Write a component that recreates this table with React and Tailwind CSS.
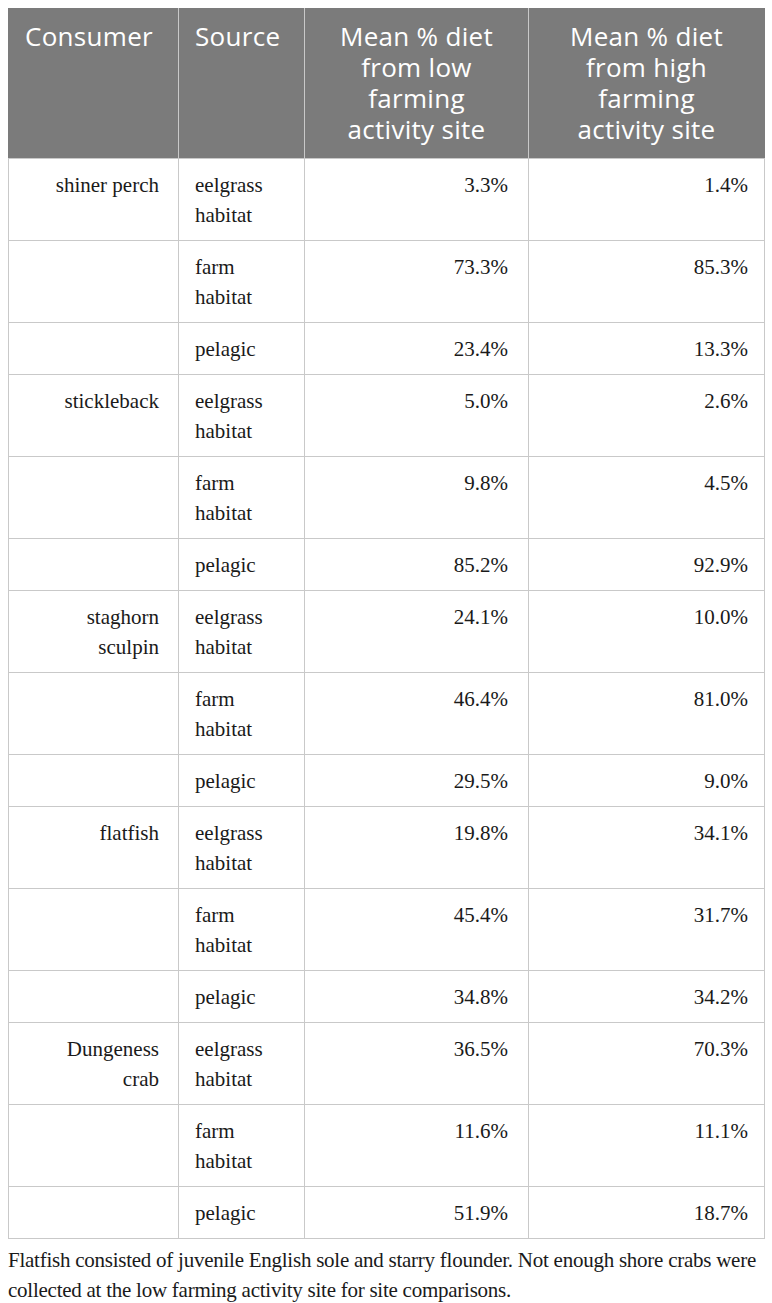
const rows = [
  [["shiner perch"], ["eelgrass", "habitat"], "3.3%", "1.4%"],
  [[], ["farm", "habitat"], "73.3%", "85.3%"],
  [[], ["pelagic"], "23.4%", "13.3%"],
  [["stickleback"], ["eelgrass", "habitat"], "5.0%", "2.6%"],
  [[], ["farm", "habitat"], "9.8%", "4.5%"],
  [[], ["pelagic"], "85.2%", "92.9%"],
  [["staghorn", "sculpin"], ["eelgrass", "habitat"], "24.1%", "10.0%"],
  [[], ["farm", "habitat"], "46.4%", "81.0%"],
  [[], ["pelagic"], "29.5%", "9.0%"],
  [["flatfish"], ["eelgrass", "habitat"], "19.8%", "34.1%"],
  [[], ["farm", "habitat"], "45.4%", "31.7%"],
  [[], ["pelagic"], "34.8%", "34.2%"],
  [["Dungeness", "crab"], ["eelgrass", "habitat"], "36.5%", "70.3%"],
  [[], ["farm", "habitat"], "11.6%", "11.1%"],
  [[], ["pelagic"], "51.9%", "18.7%"],
];

const Lines = ({ items }) =>
  items.map((t, i) => (
    <div key={i} className="whitespace-nowrap">
      {t}
    </div>
  ));

export default function App() {
  return (
    <div className="bg-white p-2 w-[772px] min-h-[1303px]">
      <table className="w-[756px] border-collapse table-fixed">
        <colgroup>
          <col className="w-[170px]" />
          <col className="w-[126px]" />
          <col className="w-[224px]" />
          <col className="w-[236px]" />
        </colgroup>
        <thead>
          <tr className="bg-[#7b7b7b] text-white font-['Open_Sans',sans-serif] text-[26px] leading-[31px] tracking-[0.3px] align-top">
            <th className="font-normal text-left pl-4 pr-2 pt-3 pb-[13px] border border-[#c9c9c9] border-t-[#7b7b7b] border-l-[#7b7b7b]">Consumer</th>
            <th className="font-normal text-left pl-4 pr-2 pt-3 pb-[13px] border border-[#c9c9c9] border-t-[#7b7b7b]">Source</th>
            <th className="font-normal text-center px-2 pt-3 pb-[13px] border border-[#c9c9c9] border-t-[#7b7b7b]">
              Mean % diet
              <br />
              from low
              <br />
              farming
              <br />
              activity site
            </th>
            <th className="font-normal text-center px-2 pt-3 pb-[13px] border border-[#c9c9c9] border-t-[#7b7b7b] border-r-[#7b7b7b]">
              Mean % diet
              <br />
              from high
              <br />
              farming
              <br />
              activity site
            </th>
          </tr>
        </thead>
        <tbody className="font-['Liberation_Serif',serif] text-[21px] leading-[30px] text-[#1a1a1a] align-top">
          {rows.map((r, i) => (
            <tr key={i}>
              <td className="text-right pl-2 pr-[19px] pt-[11px] pb-[10px] border border-[#c9c9c9]">
                <Lines items={r[0]} />
              </td>
              <td className="text-left pl-4 pr-2 pt-[11px] pb-[10px] border border-[#c9c9c9]">
                <Lines items={r[1]} />
              </td>
              <td className="text-right pl-4 pr-[20px] pt-[11px] pb-[10px] border border-[#c9c9c9]">{r[2]}</td>
              <td className="text-right pl-4 pr-[16px] pt-[11px] pb-[10px] border border-[#c9c9c9]">{r[3]}</td>
            </tr>
          ))}
        </tbody>
      </table>
      <p className="mt-[6px] font-['Liberation_Serif',serif] text-[21px] leading-[30px] text-[#1a1a1a] tracking-[-0.25px] whitespace-nowrap">
        Flatfish consisted of juvenile English sole and starry flounder. Not enough shore crabs were
        <br />
        collected at the low farming activity site for site comparisons.
      </p>
    </div>
  );
}
